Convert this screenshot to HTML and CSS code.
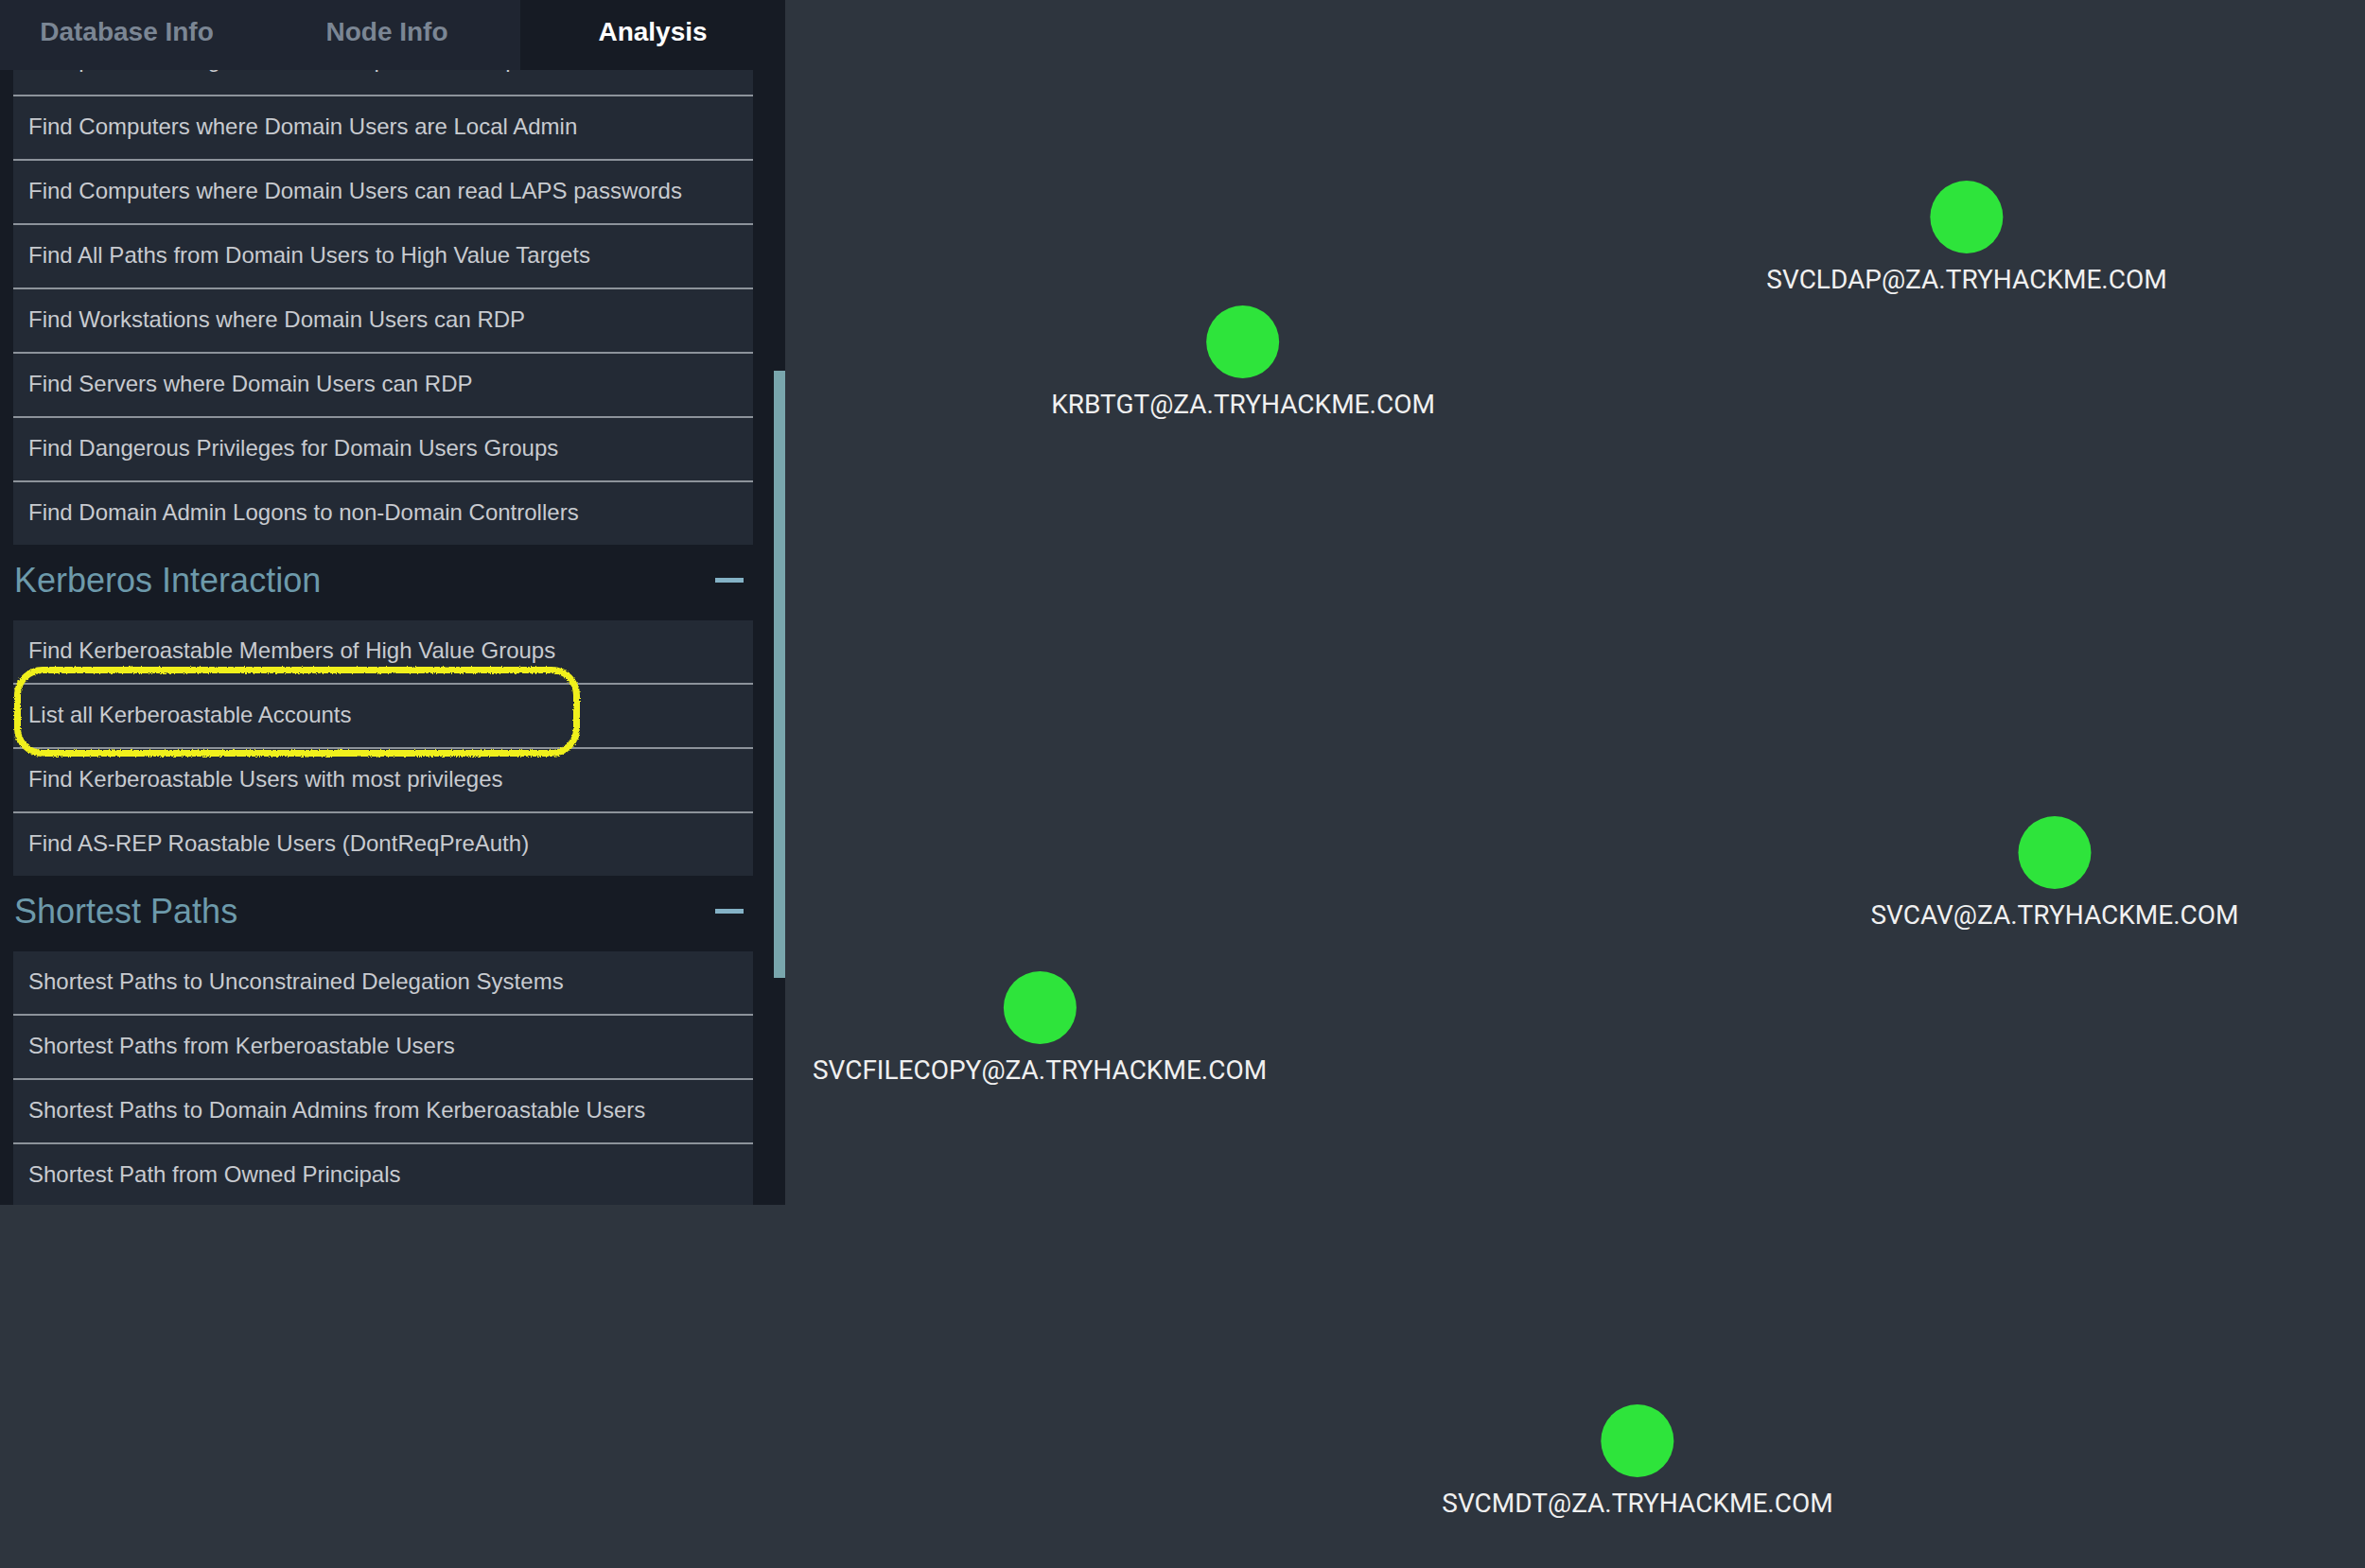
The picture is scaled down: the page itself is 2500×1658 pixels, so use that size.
FILE: index.html
```html
<!DOCTYPE html>
<html>
<head>
<meta charset="utf-8">
<link rel="stylesheet" href="styles.css">
</head>
<body>
<svg class="defs" width="0" height="0" aria-hidden="true">
  <filter id="rough" x="-5%" y="-10%" width="110%" height="120%">
    <feTurbulence type="fractalNoise" baseFrequency="0.9" numOctaves="2" seed="3" result="noise"/>
    <feDisplacementMap in="SourceGraphic" in2="noise" scale="3.5" xChannelSelector="R" yChannelSelector="G"/>
  </filter>
</svg>
<div class="app">
  <aside class="panel">
    <nav class="tabs">
      <div class="tab">Database Info</div>
      <div class="tab">Node Info</div>
      <div class="tab active">Analysis</div>
    </nav>
    <div class="scroll">
      <div class="scroll-content">
        <div class="inner">
          <ul class="group">
            <li class="item item-hidden">Groups with Foreign Domain Group Membership</li>
            <li class="item">Find Computers where Domain Users are Local Admin</li>
            <li class="item">Find Computers where Domain Users can read LAPS passwords</li>
            <li class="item">Find All Paths from Domain Users to High Value Targets</li>
            <li class="item">Find Workstations where Domain Users can RDP</li>
            <li class="item">Find Servers where Domain Users can RDP</li>
            <li class="item">Find Dangerous Privileges for Domain Users Groups</li>
            <li class="item">Find Domain Admin Logons to non-Domain Controllers</li>
          </ul>
          <div class="section-head"><span>Kerberos Interaction</span><i class="minus"></i></div>
          <ul class="group">
            <li class="item">Find Kerberoastable Members of High Value Groups</li>
            <li class="item">List all Kerberoastable Accounts</li>
            <li class="item">Find Kerberoastable Users with most privileges</li>
            <li class="item">Find AS-REP Roastable Users (DontReqPreAuth)</li>
          </ul>
          <div class="section-head"><span>Shortest Paths</span><i class="minus"></i></div>
          <ul class="group">
            <li class="item">Shortest Paths to Unconstrained Delegation Systems</li>
            <li class="item">Shortest Paths from Kerberoastable Users</li>
            <li class="item">Shortest Paths to Domain Admins from Kerberoastable Users</li>
            <li class="item">Shortest Path from Owned Principals</li>
          </ul>
        </div>
      </div>
      <div class="track"><div class="thumb"></div></div>
    </div>
    <div class="highlight"></div>
  </aside>

  <div class="node" style="left:2079px; top:191px;"><div class="dot"></div><div class="label">SVCLDAP@ZA.TRYHACKME.COM</div></div>
  <div class="node" style="left:1314px; top:323px;"><div class="dot"></div><div class="label">KRBTGT@ZA.TRYHACKME.COM</div></div>
  <div class="node" style="left:2172px; top:863px;"><div class="dot"></div><div class="label">SVCAV@ZA.TRYHACKME.COM</div></div>
  <div class="node" style="left:1099px; top:1027px;"><div class="dot"></div><div class="label">SVCFILECOPY@ZA.TRYHACKME.COM</div></div>
  <div class="node" style="left:1731px; top:1485px;"><div class="dot"></div><div class="label">SVCMDT@ZA.TRYHACKME.COM</div></div>
</div>
</body>
</html>
```

FILE: styles.css
```css
html, body {
  margin: 0;
  padding: 0;
}
body {
  background: #2e353e;
  width: 2500px;
  height: 1658px;
  overflow: hidden;
  font-family: "Liberation Sans", Arial, sans-serif;
}
.defs {
  position: absolute;
  width: 0;
  height: 0;
}
.app {
  position: relative;
  width: 2500px;
  height: 1658px;
}
.panel {
  position: relative;
  width: 830px;
  height: 1274px;
  background: #161b24;
  display: flex;
  flex-direction: column;
}
.tabs {
  display: grid;
  grid-template-columns: 268px 282px 1fr;
  height: 74px;
  background: #1f2531;
  flex: none;
}
.tab {
  text-align: center;
  font-weight: bold;
  font-size: 28px;
  line-height: 68px;
  padding-bottom: 6px;
  color: #7b8694;
  white-space: nowrap;
}
.tab.active {
  background: #161b24;
  color: #ffffff;
}
.scroll {
  flex: 1;
  display: flex;
  overflow: hidden;
}
.scroll-content {
  flex: 1;
  overflow: hidden;
  padding: 0 22px 0 14px;
}
.inner {
  margin-top: -40px;
}
.group {
  list-style: none;
  margin: 0;
  padding: 0;
  background: #232a35;
}
.item {
  padding: 15px 16px 17px;
  font-size: 24px;
  line-height: 34px;
  color: #c8cbd0;
  white-space: nowrap;
}
.item-hidden {
  padding-top: 12px;
  padding-bottom: 20px;
}
.item + .item {
  border-top: 2px solid #8d939b;
}
.section-head {
  display: flex;
  align-items: center;
  justify-content: space-between;
  height: 80px;
  font-size: 36px;
  line-height: 76px;
  padding-bottom: 4px;
  box-sizing: border-box;
  color: #6d9aab;
}
.section-head span {
  padding-left: 1px;
}
.minus {
  display: block;
  width: 30px;
  height: 5px;
  background: #84b2c6;
  margin-right: 10px;
  margin-top: -1px;
}
.track {
  width: 12px;
  flex: none;
}
.thumb {
  margin-top: 318px;
  height: 642px;
  background: #79a6ad;
}
.highlight {
  position: absolute;
  left: 15px;
  top: 705px;
  width: 598px;
  height: 95px;
  box-sizing: border-box;
  border: 7px solid #f0f01c;
  border-radius: 30px;
  filter: url(#rough);
}
.node {
  position: absolute;
  transform: translateX(-50%);
  display: flex;
  flex-direction: column;
  align-items: center;
}
.dot {
  width: 77px;
  height: 77px;
  border-radius: 50%;
  background: #2ee43b;
}
.label {
  margin-top: 12px;
  font-family: Roboto, "Liberation Sans", sans-serif;
  font-size: 28px;
  line-height: 32px;
  color: #f0f0f0;
  white-space: nowrap;
}
```
